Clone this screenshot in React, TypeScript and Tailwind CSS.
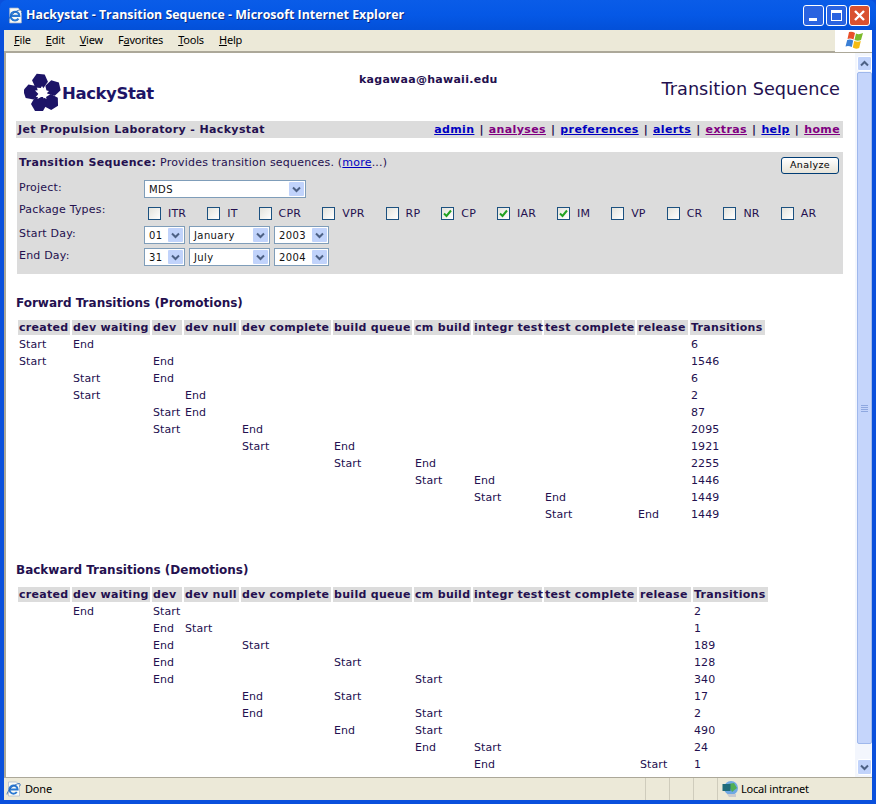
import React from "react";

const hdr = ["created","dev waiting","dev","dev null","dev complete","build queue","cm build","integr test","test complete","release","Transitions"];
const fw: [Record<number,string>,string][] = [
  [{0:"Start",1:"End"},"6"],
  [{0:"Start",2:"End"},"1546"],
  [{1:"Start",2:"End"},"6"],
  [{1:"Start",3:"End"},"2"],
  [{2:"Start",3:"End"},"87"],
  [{2:"Start",4:"End"},"2095"],
  [{4:"Start",5:"End"},"1921"],
  [{5:"Start",6:"End"},"2255"],
  [{6:"Start",7:"End"},"1446"],
  [{7:"Start",8:"End"},"1449"],
  [{8:"Start",9:"End"},"1449"],
];
const bw: [Record<number,string>,string][] = [
  [{1:"End",2:"Start"},"2"],
  [{2:"End",3:"Start"},"1"],
  [{2:"End",4:"Start"},"189"],
  [{2:"End",5:"Start"},"128"],
  [{2:"End",6:"Start"},"340"],
  [{4:"End",5:"Start"},"17"],
  [{4:"End",6:"Start"},"2"],
  [{5:"End",6:"Start"},"490"],
  [{6:"End",7:"Start"},"24"],
  [{7:"End",9:"Start"},"1"],
];

function Table({ widths, rows }: { widths: number[]; rows: [Record<number,string>,string][] }) {
  const total = widths.reduce((a, b) => a + b + 2, 2);
  return (
    <table className="table-fixed border-separate border-spacing-[2px]" style={{ width: total }}>
      <colgroup>{widths.map((w, i) => <col key={i} style={{ width: w }} />)}</colgroup>
      <thead>
        <tr>
          {hdr.map(h => <th key={h} className="h-[15px] bg-[#dcdcdc] px-px py-0 text-left font-bold text-[11px] leading-[15px] tracking-[0.3px] whitespace-nowrap text-[#24104f]">{h}</th>)}
        </tr>
      </thead>
      <tbody>
        {rows.map((r, i) => (
          <tr key={i}>
            {hdr.map((_, c) => <td key={c} className="h-[15px] p-0 px-px text-[11px] leading-[15px] tracking-[0.1px] whitespace-nowrap text-[#24104f]">{c === 10 ? r[1] : r[0][c] ?? ""}</td>)}
          </tr>
        ))}
      </tbody>
    </table>
  );
}

function Chevron() {
  return (
    <svg width="9" height="7" viewBox="0 0 9 7"><path d="M1 1.5 L4.5 5 L8 1.5" fill="none" stroke="#4d6185" strokeWidth="2" /></svg>
  );
}

function Select({ value, w }: { value: string; w: string }) {
  return (
    <div className={`${w} h-[18px] border border-[#7f9db9] bg-white flex items-center justify-between pl-[4px] pr-px text-[10px] tracking-[0.4px] text-[#111]`}>
      <span>{value}</span>
      <span className="w-[15px] h-[14px] bg-[#c1d3fb] rounded-[1px] flex items-center justify-center"><Chevron /></span>
    </div>
  );
}

function Check({ label, on }: { label: string; on?: boolean }) {
  return (
    <div className="flex items-center gap-[7px]">
      <span className="w-[13px] h-[13px] border border-[#1c5180] bg-gradient-to-br from-[#e4e3dc] to-white flex items-center justify-center">
        {on && <svg width="9" height="9" viewBox="0 0 9 9"><path d="M1 4.5 L3.5 7 L8 1.5" fill="none" stroke="#21a121" strokeWidth="2" /></svg>}
      </span>
      <span className="text-[11px] leading-[13px] text-[#24104f]">{label}</span>
    </div>
  );
}

function IE({ size }: { size: number }) {
  return (
    <svg width={size} height={size} viewBox="0 0 16 16">
      <path d="M2.5 1 H10.5 L13.5 4 V15 H2.5 Z" fill="#fbfbf6" stroke="#a8b4c8" strokeWidth="0.7" />
      <path d="M3.6 8.4 H11.6 A4.1 4.1 0 1 0 10.8 11" fill="none" stroke="#2a78d2" strokeWidth="2" />
      <path d="M1 13.5 C1 10 8 3 13 2.5 C14.5 2.5 14.5 4 13.5 5.5" fill="none" stroke="#1b5db5" strokeWidth="0.8" />
    </svg>
  );
}

function Logo() {
  const hex = (cx: number, cy: number, r = 8.2, rot = 0.2) =>
    Array.from({ length: 6 }, (_, i) => {
      const a = (Math.PI / 3) * i + rot;
      return `${cx + r * Math.cos(a)},${cy + r * Math.sin(a)}`;
    }).join(" ");
  return (
    <div className="flex items-start">
      <svg width="37" height="38" viewBox="0 0 37 38">
        {[[16, 8, 0.1],[29, 15, 0.3],[27, 29, 0.5],[15, 31, 0],[7, 19, 0.2]].map(([x, y, r], i) => <polygon key={i} points={hex(x, y, 8, r)} fill="#1d1467" />)}
        <polygon points="18,13 20.5,17 25,18 21.5,21.5 22.5,26 18,23.5 13.5,26 14.5,21 11,17.5 15.5,17" fill="#fff" />
      </svg>
      <span className="ml-[1px] mt-[11px] text-[16.5px] leading-[20px] font-bold tracking-[-0.4px] text-[#1d1467] whitespace-nowrap">HackyStat</span>
    </div>
  );
}

function Link({ t, v }: { t: string; v?: boolean }) {
  return <a className={`underline ${v ? "text-[#800080]" : "text-[#0000c0]"}`}>{t}</a>;
}

const fwW = [52,78,30,55,90,79,57,69,91,51,75];
const bwW = [52,78,30,55,90,79,57,69,93,52,75];

export default function App() {
  const nav: [string, boolean][] = [["admin",false],["analyses",true],["preferences",false],["alerts",false],["extras",true],["help",false],["home",true]];
  return (
    <div className="w-[876px] h-[804px] flex flex-col overflow-hidden bg-[#0a50dc] [font-family:'DejaVu_Sans',sans-serif] text-[#24104f]">
      {/* Title bar */}
      <div className="h-[30px] shrink-0 flex items-center pl-[7px] pr-[6px] rounded-t-[7px] bg-gradient-to-b from-[#0a5ce8] via-[#0558e6] to-[#0350d8]">
        <IE size={17} />
        <span className="ml-[2px] text-white font-bold text-[12.4px] whitespace-nowrap [font-family:'Open_Sans',sans-serif] [text-shadow:1px_1px_#0a2a80]">Hackystat - Transition Sequence - Microsoft Internet Explorer</span>
        <div className="ml-auto flex gap-[2px]">
          <div className="w-[21px] h-[21px] rounded-[3px] border border-white bg-[#2a63e0] flex items-end pl-[5px] pb-[4px]"><div className="w-[8px] h-[3px] bg-white" /></div>
          <div className="w-[21px] h-[21px] rounded-[3px] border border-white bg-[#2a63e0] flex items-center justify-center"><div className="w-[11px] h-[11px] border border-white border-t-[3px]" /></div>
          <div className="w-[21px] h-[21px] rounded-[3px] border border-white bg-[#d9512f] flex items-center justify-center">
            <svg width="13" height="13" viewBox="0 0 13 13"><path d="M2 2 L11 11 M11 2 L2 11" stroke="#fff" strokeWidth="2.4" /></svg>
          </div>
        </div>
      </div>
      {/* Body */}
      <div className="flex-1 min-h-0 mx-[4px] flex flex-col bg-[#ece9d8]">
        <div className="h-[22px] shrink-0 flex items-center text-[11px] tracking-[-0.2px] text-black [font-family:'Noto_Sans',sans-serif] border-b border-[#aca899]">
          <div className="flex pl-[10px] gap-[15px]">
            {[["F","ile"],["E","dit"],["V","iew"],["Fa","vorites"],["T","ools"],["H","elp"]].map(([a,b]) => (
              <span key={b}>{a === "Fa" ? <>F<u>a</u></> : <u>{a}</u>}{b}</span>
            ))}
          </div>
          <div className="ml-auto w-[37px] h-[22px] bg-white flex items-center justify-center">
            <svg width="20" height="19" viewBox="0 0 20 19">
              <path d="M5 1 Q8 0 11 2 L9.5 8.5 Q6.5 7 3.5 8 Z" fill="#e8502a" /><path d="M12 2.5 Q15 4 19 2 L17 9 Q14 10.5 10.5 9 Z" fill="#7cba2c" />
              <path d="M3.2 9 Q6.2 8 9.2 9.5 L7.8 16 Q4.5 14.5 1.5 15.5 Z" fill="#3a7fd5" /><path d="M10.2 10 Q14 11.5 16.8 10 L15.2 17 Q11.5 18.5 8.8 16.5 Z" fill="#f5bb12" />
            </svg>
          </div>
        </div>
        <div className="flex-1 min-h-0 flex bg-white border-l-2 border-t border-[#aca899] overflow-hidden">
          <div className="w-[849px] shrink-0 overflow-hidden pl-[10px] pr-[10px]">
            <div className="h-[68px] flex">
              <div className="w-[343px] shrink-0 pl-[8px] pt-[20px]"><Logo /></div>
              <div className="pt-[19px] font-bold text-[11px] leading-[15px] tracking-[0.27px] whitespace-nowrap">kagawaa@hawaii.edu</div>
              <div className="ml-auto mt-[25px] mr-[5px] text-[17.7px] leading-[22px] whitespace-nowrap">Transition Sequence</div>
            </div>
            <div className="h-[17px] w-[827px] bg-[#dcdcdc] flex items-center justify-between pl-[2px] pr-[3px] pt-[1px] text-[11px] font-bold tracking-[0.37px]">
              <span>Jet Propulsion Laboratory - Hackystat</span>
              <span className="whitespace-nowrap flex gap-[5px]">
                {nav.map(([n, v], i) => <React.Fragment key={n}>{i > 0 && <span>|</span>}<Link t={n} v={v} /></React.Fragment>)}
              </span>
            </div>
            <div className="mt-[14px] ml-px h-[122px] w-[826px] bg-[#dcdcdc] px-[2px] pt-[3px] text-[11px] tracking-[0.2px] flex flex-col">
              <div className="flex justify-between h-[21px]">
                <span><b className="tracking-[0.35px]">Transition Sequence:</b> Provides transition sequences. (<Link t="more" />...)</span>
                <div className="mr-[2px] mt-[2px] w-[58px] h-[17px] rounded-[3px] border border-[#003c74] bg-gradient-to-b from-white to-[#e6e3d8] flex items-center justify-center text-[9.5px] tracking-[0.4px] text-black">Analyze</div>
              </div>
              <div className="grid grid-cols-[125px_1fr] grid-rows-[23px_23px_22px_22px] mt-[4px]">
                <span className="leading-[13px] pt-[1px]">Project:</span>
                <Select value="MDS" w="w-[162px]" />
                <span className="leading-[13px]">Package Types:</span>
                <div className="flex items-start gap-[21px] pl-[4px] pt-[4px]">
                  {[["ITR"],["IT"],["CPR"],["VPR"],["RP"],["CP",1],["IAR",1],["IM",1],["VP"],["CR"],["NR"],["AR"]].map(([l,o]) => <Check key={l as string} label={l as string} on={!!o} />)}
                </div>
                <span className="leading-[13px] pt-px">Start Day:</span>
                <div className="flex gap-[4px]"><Select value="01" w="w-[41px]" /><Select value="January" w="w-[81px]" /><Select value="2003" w="w-[55px]" /></div>
                <span className="leading-[13px] pt-px">End Day:</span>
                <div className="flex gap-[4px]"><Select value="31" w="w-[41px]" /><Select value="July" w="w-[81px]" /><Select value="2004" w="w-[55px]" /></div>
              </div>
            </div>
            <div className="mt-[22px] text-[12px] font-bold leading-[15px]">Forward Transitions (Promotions)</div>
            <div className="mt-[7px]"><Table widths={fwW} rows={fw} /></div>
            <div className="mt-[39px] text-[12px] font-bold leading-[15px]">Backward Transitions (Demotions)</div>
            <div className="mt-[7px]"><Table widths={bwW} rows={bw} /></div>
          </div>
          {/* Scrollbar */}
          <div className="w-[18px] shrink-0 flex flex-col pt-[3px] pb-[2px] pl-[2px] pr-px bg-[#f3f6fd]">
            <div className="h-[15px] bg-[#c1d3fb] border border-white rounded-[2px] flex items-center justify-center rotate-180"><Chevron /></div>
            <div className="flex-1 flex flex-col mt-px">
              <div className="h-[672px] bg-[#c5d5fb] border border-[#9fb8ec] rounded-[2px] flex flex-col items-center justify-center gap-px">
                {[0,1,2,3].map(i => <div key={i} className="w-[7px] h-px bg-[#8fa8e0]" />)}
              </div>
            </div>
            <div className="h-[16px] bg-[#c1d3fb] border border-white rounded-[2px] flex items-center justify-center"><Chevron /></div>
          </div>
        </div>
        <div className="h-[23px] shrink-0 flex items-center text-[11px] tracking-[-0.2px] text-black border-t border-[#aca899] [font-family:'Noto_Sans',sans-serif]">
          <div className="ml-[2px]"><IE size={16} /></div>
          <span className="ml-[3px]">Done</span>
          <div className="ml-auto flex h-full items-center">
            <div className="w-[24px] h-full border-l border-[#cfccbc]" />
            <div className="w-[24px] h-full border-l border-[#cfccbc]" />
            <div className="w-[24px] h-full border-l border-[#cfccbc]" />
            <div className="w-[155px] h-full border-l border-[#cfccbc] flex items-center pl-[4px] gap-[2px]">
              <svg width="17" height="17" viewBox="0 0 17 17">
                <circle cx="9" cy="7" r="7" fill="#6fa8e4" /><path d="M6 3 L12 2 L15 7 L10 11 Z" fill="#4fae55" />
                <rect x="0.5" y="3" width="8" height="7" fill="#1f6b7a" /><path d="M5 13 H14 V16 H7 Z" fill="#c8cad0" />
              </svg>
              <span>Local intranet</span>
            </div>
          </div>
        </div>
      </div>
      <div className="h-[4px] shrink-0" />
    </div>
  );
}
